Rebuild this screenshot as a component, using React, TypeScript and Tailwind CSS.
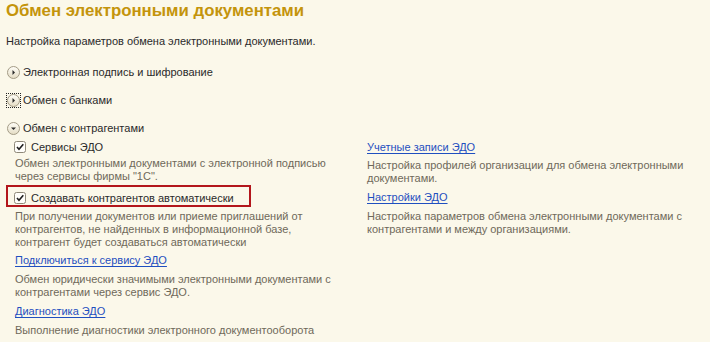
import React from 'react';

function Toggle({ open, focused }: { open?: boolean; focused?: boolean }) {
  return (
    <span
      className={`flex items-center justify-center w-[15px] h-[15px] shrink-0 ${focused ? 'outline outline-1 outline-dotted outline-[#222] -outline-offset-1' : ''}`}>
      <svg width="13" height="13" viewBox="0 0 13 13">
        <defs>
          <linearGradient id="tg" x1="0" y1="0" x2="0" y2="1">
            <stop offset="0" stopColor="#fffef8" />
            <stop offset="1" stopColor="#e4dcc4" />
          </linearGradient>
        </defs>
        <circle cx="6.5" cy="6.5" r="6" fill="url(#tg)" stroke="#a39b86" />
        {open ?
        <path d="M4 5.5 L9 5.5 L6.5 8 Z" fill="#2b2b2b" /> :
        <path d="M5.5 4 L8 6.5 L5.5 9 Z" fill="#2b2b2b" />}
      </svg>
    </span>);
}

function Check() {
  return (
    <svg width="12" height="12" viewBox="0 0 12 12" className="shrink-0">
      <rect x="0.5" y="0.5" width="11" height="11" rx="2" fill="#fffefa" stroke="#8e8878" />
      <path d="M3 6 L5 8.3 L9.3 3.3" fill="none" stroke="#1e1e1e" strokeWidth="1.6" />
    </svg>);
}

function Group({ title, open, focused }: { title: string; open?: boolean; focused?: boolean }) {
  return (
    <div className="flex items-center gap-[2px] h-[14px]">
      <Toggle open={open} focused={focused} />
      <span>{title}</span>
    </div>);
}

export default function App() {
  return (
    <div className="w-[710px] h-[342px] overflow-hidden whitespace-nowrap bg-[#FBF8EA] font-['Liberation_Sans',Arial,sans-serif] text-[11px] leading-[14px] text-[#2a2a2a]">
      <div className="pl-[6px] pt-[1px]">
        <h1 className="text-[16.8px] leading-[20px] font-bold text-[#c4940c]">
          Обмен электронными документами
        </h1>
        <p className="mt-[13px]">Настройка параметров обмена электронными документами.</p>

        <div className="mt-[17px] flex flex-col gap-[14px]">
          <Group title="Электронная подпись и шифрование" />
          <Group title="Обмен с банками" focused />
          <Group title="Обмен с контрагентами" open />
        </div>

        <div className="mt-[5px] ml-[8px] flex">
          <div className="w-[353px] flex flex-col">
            <label className="flex items-center gap-[5px] h-[14px]">
              <Check />
              <span>Сервисы ЭДО</span>
            </label>
            <p className="mt-[3px] ml-px leading-[13px] text-[#6f695a]">
              Обмен электронными документами с электронной подписью<br />
              через сервисы фирмы "1С".
            </p>
            <div className="mt-[2px] -ml-[8px] w-[245px] border-2 border-[#b3161c] pl-[6px] pt-[4px] h-[22px]">
              <label className="flex items-center gap-[5px] h-[14px]">
                <Check />
                <span>Создавать контрагентов автоматически</span>
              </label>
            </div>
            <p className="mt-[3px] ml-px leading-[13px] text-[#6f695a]">
              При получении документов или приеме приглашений от<br />
              контрагентов, не найденных в информационной базе,<br />
              контрагент будет создаваться автоматически
            </p>
            <a className="mt-[4px] ml-px w-fit text-[#1f4fc0] underline underline-offset-2">
              Подключиться к сервису ЭДО
            </a>
            <p className="mt-[6px] ml-px leading-[13px] text-[#6f695a]">
              Обмен юридически значимыми электронными документами с<br />
              контрагентами через сервис ЭДО.
            </p>
            <a className="mt-[5px] ml-px w-fit text-[#1f4fc0] underline underline-offset-2">
              Диагностика ЭДО
            </a>
            <p className="mt-[6px] ml-px leading-[13px] text-[#6f695a]">
              Выполнение диагностики электронного документооборота
            </p>
          </div>

          <div className="flex flex-col">
            <a className="w-fit text-[#1f4fc0] underline underline-offset-2">Учетные записи ЭДО</a>
            <p className="mt-[5px] leading-[13px] text-[#6f695a]">
              Настройка профилей организации для обмена электронными<br />
              документами.
            </p>
            <a className="mt-[5px] w-fit text-[#1f4fc0] underline underline-offset-2">Настройки ЭДО</a>
            <p className="mt-[6px] leading-[13px] text-[#6f695a]">
              Настройка параметров обмена электронными документами с<br />
              контрагентами и между организациями.
            </p>
          </div>
        </div>
      </div>
    </div>);
}
